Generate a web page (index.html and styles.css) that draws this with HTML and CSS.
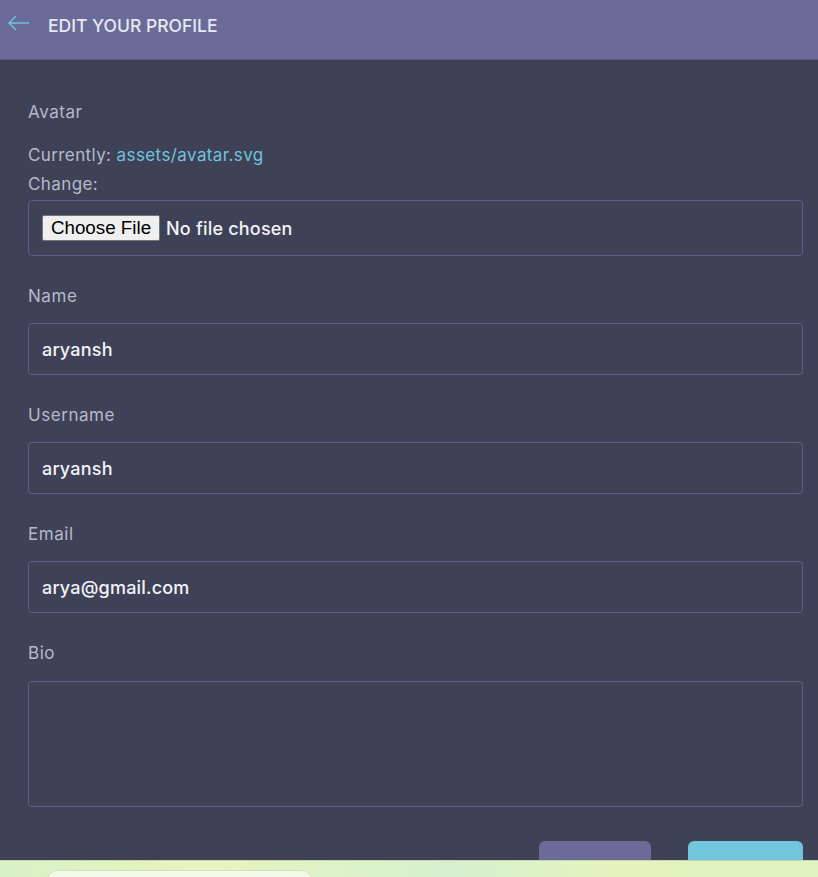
FILE: index.html
```html
<!DOCTYPE html>
<html>
<head>
<meta charset="utf-8">
<link rel="stylesheet" href="styles.css">
</head>
<body>
<div class="screen">
  <header class="topbar">
    <svg class="back" width="24" height="16" viewBox="0 0 24 16"><path d="M22 8H2M9 1L2 8l7 7" fill="none" stroke="#6ec4db" stroke-width="1.4"/></svg>
    <h1 class="title">EDIT YOUR PROFILE</h1>
  </header>
  <main class="content">
    <div class="label avatar-label">Avatar</div>
    <div class="current">Currently: <a class="link">assets/avatar.svg</a></div>
    <div class="current">Change:</div>
    <div class="filebox">
      <span class="choose">Choose File</span>
      <span class="nofile">No file chosen</span>
    </div>
    <div class="field">
      <div class="label">Name</div>
      <div class="input">aryansh</div>
    </div>
    <div class="field">
      <div class="label">Username</div>
      <div class="input">aryansh</div>
    </div>
    <div class="field">
      <div class="label">Email</div>
      <div class="input">arya@gmail.com</div>
    </div>
    <div class="field field-last">
      <div class="label">Bio</div>
      <div class="input textarea"></div>
    </div>
    <div class="actions">
      <span class="btn btn-cancel"></span>
      <span class="btn btn-save"></span>
    </div>
  </main>
</div>
<div class="taskbar">
  <div class="search"></div>
</div>
</body>
</html>
```
FILE: styles.css
```css
* { box-sizing: border-box; }
html, body { margin: 0; padding: 0; }
body {
  font-family: Inter, "Open Sans", sans-serif;
  background: #3f4157;
  height: 877px;
  overflow: hidden;
}
.screen {
  height: 860px;
  overflow: hidden;
  display: flex;
  flex-direction: column;
}
.topbar {
  height: 60px;
  flex: none;
  background: #6b6b99;
  border-bottom: 1px solid #5b5b85;
  display: flex;
  align-items: flex-start;
  padding-left: 7px;
}
.back { margin-top: 15px; }
.title {
  margin: 15px 0 0 17px;
  font-size: 17.5px;
  font-weight: 500;
  color: #e8e9f2;
  line-height: 22px;
}
.content {
  flex: none;
  padding: 42px 15px 0 28px;
  display: flex;
  flex-direction: column;
}
.label {
  font-size: 17px;
  line-height: 20px;
  letter-spacing: 0.55px;
  color: #b6b9c9;
}
.avatar-label { margin-bottom: 19px; }
.current {
  font-size: 17px;
  letter-spacing: 0.4px;
  line-height: 29px;
  color: #b6b9c9;
}
.link { color: #6ec4db; }
.filebox {
  margin-top: 1px;
  height: 56px;
  border: 1px solid #5e5e8c;
  border-radius: 4px;
  display: flex;
  align-items: center;
  padding-left: 13px;
  gap: 6px;
  margin-bottom: 29px;
}
.choose {
  font-family: "Liberation Sans", Arial, sans-serif;
  font-size: 18.8px;
  color: #000;
  background: #efefef;
  border: 1px solid #767676;
  border-radius: 2px;
  height: 26px;
  width: 118px;
  display: flex;
  align-items: center;
  justify-content: center;
}
.nofile {
  font-size: 18px;
  font-weight: 500;
  letter-spacing: 0.2px;
  color: #f2f3f7;
}
.field { margin-bottom: 29px; }
.field .label { line-height: 22px; margin-bottom: 16px; }
.field-last { margin-bottom: 0; }
.field-last .label { margin-bottom: 17px; }
.input {
  height: 52px;
  border: 1px solid #5e5e8c;
  border-radius: 4px;
  padding: 0 13px;
  display: flex;
  align-items: center;
  font-size: 18px;
  font-weight: 500;
  letter-spacing: 0.2px;
  color: #f2f3f7;
}
.textarea { height: 126px; }
.actions {
  margin-top: 34px;
  display: flex;
  justify-content: flex-end;
  gap: 37px;
}
.btn {
  display: block;
  height: 40px;
  border-radius: 6px;
}
.btn-cancel { width: 112px; background: #6b6b99; }
.btn-save { width: 115px; background: #71c5dc; }
.taskbar {
  height: 17px;
  background: linear-gradient(90deg, #d9f1c6 0%, #e6f5c0 25%, #d6f0cf 55%, #e3f3bd 75%, #dff4c0 100%);
  border-top: 1px solid #c7d9a8;
  overflow: hidden;
}
.search {
  margin: 9px 0 0 47px;
  width: 265px;
  height: 20px;
  border-radius: 10px;
  background: #f3f9e8;
  border: 1px solid #d3e3bd;
}
```
